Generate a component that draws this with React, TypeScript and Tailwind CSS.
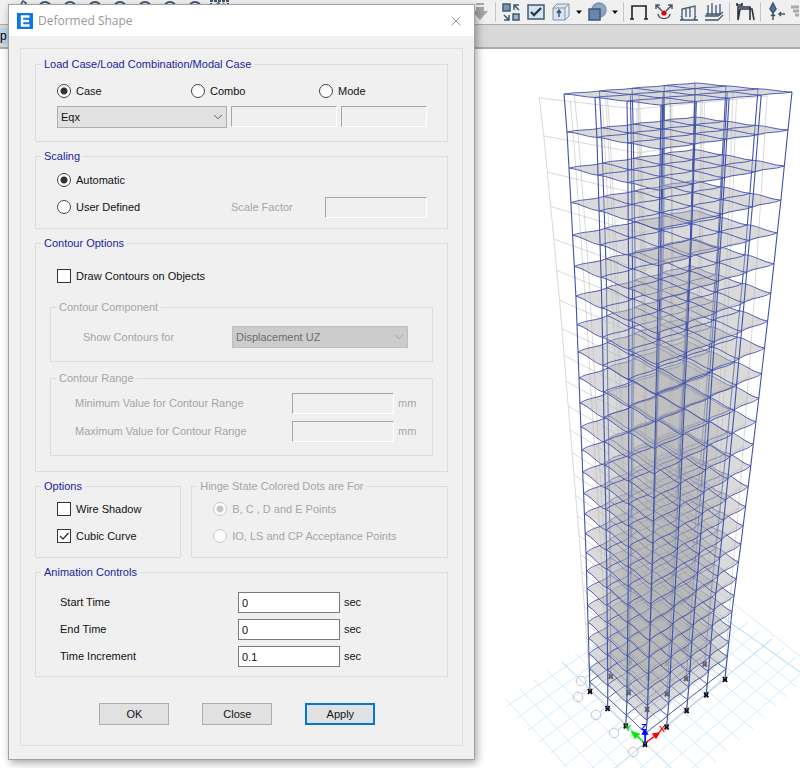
import React from 'react';
import { ChevronDown, X } from 'lucide-react';

type Pt = [number, number];

// x position of a corner column, sampled along its height as [y, x]
const LEFT: Pt[] = [[94, 564], [132, 567], [204, 571], [299, 576], [405, 580], [553, 586], [691, 590]];
const RIGHT: Pt[] = [[92, 792], [130, 788], [199, 781], [291, 771], [396, 759], [464, 751], [543, 741], [611, 732], [679, 725]];
const FRONT: Pt[] = [[105, 661], [300, 658], [540, 653], [722, 647], [744, 645]];
const BACK: Pt[] = [[83, 695], [240, 691], [300, 687], [635, 667]];

const U = [0, 0.27, 0.52, 0.765, 1];
const V = [0, 0.35, 0.68, 1];
const LAST = 26;

const sample = (table: Pt[], y: number) => {
  for (let i = 1; i < table.length; i++) {
    const [y0, x0] = table[i - 1];
    const [y1, x1] = table[i];
    if (y <= y1) return x0 + ((x1 - x0) * (y - y0)) / (y1 - y0);
  }
  return table[table.length - 1][1];
};

const corner = (table: Pt[], k: number, a: number, b: number, c: number, plinth: number, base: number): Pt => {
  const y = k === LAST ? base : k === LAST - 1 ? plinth : (a + b * k) / (1 + c * k);
  return [sample(table, y), y];
};

// levels[k][v][u], k = 0 is the roof and the last one is the ground
const levels: Pt[][][] = Array.from({ length: LAST + 1 }, (_, k) => {
  const f = corner(FRONT, k, 105, 48.79, 0.03218, 733, 744);
  const l = corner(LEFT, k, 94, 41.45, 0.02615, 682, 691);
  const r = corner(RIGHT, k, 92, 41.58, 0.02757, 669, 679);
  const b = corner(BACK, k, 83, 36.8, 0.0239, 626, 635);
  return V.map((v) =>
    U.map((u): Pt => [
      (1 - u) * (1 - v) * f[0] + u * (1 - v) * r[0] + (1 - u) * v * l[0] + u * v * b[0],
      (1 - u) * (1 - v) * f[1] + u * (1 - v) * r[1] + (1 - u) * v * l[1] + u * v * b[1],
    ])
  );
});

const n = (x: number) => x.toFixed(1);

const ghost = ([x, y]: Pt): Pt => {
  const t = Math.max(0, (680 - y) / 590);
  return [x - 25 * t, y + 4 * Math.min(1, t * 1.6)];
};

const beam = (a: Pt, b: Pt, amp: number) =>
  `M${n(a[0])} ${n(a[1])}C${n(a[0] + (b[0] - a[0]) / 3)} ${n(a[1] + (b[1] - a[1]) / 3 - amp)} ${n(a[0] + ((b[0] - a[0]) * 2) / 3)} ${n(a[1] + ((b[1] - a[1]) * 2) / 3 + amp)} ${n(b[0])} ${n(b[1])}`;

const beamsPath = (g: Pt[][], amp: number) => {
  let d = '';
  for (let v = 0; v < 4; v++) {
    for (let u = 0; u < 5; u++) {
      if (u < 4) d += beam(g[v][u], g[v][u + 1], amp);
      if (v < 3) d += beam(g[v][u], g[v + 1][u], -amp);
    }
  }
  return d;
};

const columnsPath = (top: Pt[][], bottom: Pt[][]) => {
  let d = '';
  top.forEach((row, v) => row.forEach((p, u) => {
    const q = bottom[v][u];
    d += `M${n(p[0])} ${n(p[1])}L${n(q[0])} ${n(q[1])}`;
  }));
  return d;
};

const RISING: number[][] = [
  [692, 768, 808, 667], [665, 768, 796, 657], [640, 768, 784, 648], [592, 768, 759, 631], [563, 767, 748, 622],
  [551, 753, 736, 613], [539, 742, 724, 605], [528, 730, 713, 597], [517, 718, 701, 589], [506, 707, 690, 582],
];
const FALLING: number[][] = [
  [506, 699, 567, 767], [520, 689, 594, 768], [534, 680, 619, 768], [548, 671, 645, 768], [575, 653, 698, 768],
  [587, 645, 716, 762], [599, 637, 727, 751], [611, 629, 740, 740], [623, 621, 753, 729], [635, 613, 764, 717],
  [647, 605, 776, 706], [659, 597, 787, 697], [671, 589, 797, 687], [695, 573, 805, 660],
];
const AXES: number[][] = [[615, 768, 772, 639], [562, 662, 671, 768], [683, 589, 800, 672]];
const BUBBLES: Pt[] = [[581, 681], [578, 697], [596, 715], [614, 733], [633, 752]];

const segs = (list: number[][]) => list.map(([a, b, c, d]) => `M${a} ${b}L${c} ${d}`).join('');

function Model() {
  const order = Array.from({ length: LAST }, (_, i) => LAST - 1 - i);
  const ground = levels[LAST];
  return (
    <svg viewBox="475 49 325 719" className="block w-full" fill="none" role="img" aria-label="Deformed model">
      <path d={segs(RISING) + segs(FALLING)} stroke="#d6eafb" />
      <path d={segs(AXES)} stroke="#abd6fa" />
      {BUBBLES.map(([x, y]) => (
        <g key={x} stroke="#c8c8c8">
          <circle cx={x} cy={y} r="4.8" />
          <path d={`M${x + 4} ${y - 3}l8 -6`} />
        </g>
      ))}
      <path d={beamsPath(ground, 0)} stroke="#cdcdcd" />
      {order.map((k) => {
        const g = levels[k].map((row) => row.map(ghost));
        const below = levels[k + 1].map((row) => row.map(ghost));
        const edge = `M${g[3][0].map(n)}L${g[2][0].map(n)}L${g[1][0].map(n)}L${g[0][0].map(n)}L${g[0][4].map(n)}`;
        return <path key={k} d={columnsPath(g, below) + edge} stroke="#b4b4b4" strokeOpacity="0.5" />;
      })}
      {ground.flat().map(([x, y]) => (
        <path key={`${x}-${y}`} d={`M${n(x - 2)} ${n(y - 2)}l4 5m0 -5l-4 5m0 -3h4`} stroke="#111" strokeWidth="2" />
      ))}
      {order.map((k) => {
        const g = levels[k];
        const amp = k === 0 ? 1 : Math.min(3, 1.5 + k * 0.12);
        const slab = [g[0][0], g[0][4], g[3][4], g[3][0]].map((p) => p.map(n).join(',')).join(' ');
        return (
          <g key={k}>
            <path d={columnsPath(g, levels[k + 1])} stroke="#4252aa" strokeWidth="1.1" />
            {k < LAST - 1 && <polygon points={slab} fill="#b6b6b6" fillOpacity="0.5" />}
            <path d={beamsPath(g, k === LAST - 1 ? 1 : amp)} stroke="#4252aa" strokeOpacity="0.9" />
          </g>
        );
      })}
      <g strokeWidth="1.4">
        <path d="M645 743L633 733" stroke="#0e0" />
        <path d="M632 732l7 2l-4 4z" fill="#0e0" stroke="#0e0" />
        <path d="M645 743L658 734" stroke="#f00" />
        <path d="M659 733l-6 1l3 4z" fill="#f00" stroke="#f00" />
        <path d="M645 743V732" stroke="#00f" />
        <path d="M644.500 730l-2 4h5z" fill="#00f" stroke="#00f" />
      </g>
      <g fontFamily="Liberation Sans, sans-serif" fontSize="9" fontWeight="bold">
        <text x="625" y="731" fill="#0d0">Y</text>
        <text x="659" y="732" fill="#f00">X</text>
        <text x="641" y="730" fill="#00f">Z</text>
      </g>
    </svg>
  );
}

function Tool({ label, children, box = '0 0 20 20', className = 'w-5' }: { label: string; children: React.ReactNode; box?: string; className?: string }) {
  return (
    <button aria-label={label} className={`h-5 shrink-0 ${className}`}>
      <svg viewBox={box} className="block h-full w-full" fill="none" stroke="#3f5873" strokeWidth="1.5">{children}</svg>
    </button>
  );
}

function Divider() {
  return <span className="h-5 w-px shrink-0 bg-[#c4c4c4]" />;
}

function Caret({ label }: { label: string }) {
  return (
    <Tool label={label} box="0 0 6 20" className="w-[6px]">
      <path d="M0 8.500h6l-3 3.500z" fill="#111" stroke="none" />
    </Tool>
  );
}

function Toolbar() {
  return (
    <header>
      <div className="flex h-[25px] items-center overflow-hidden border-b border-[#a9a9a9] bg-[#f0f0f0]">
        <div className="flex h-full flex-1 items-start gap-[5px] overflow-hidden pl-[10px]">
          <Tool label="Pen"><path d="M2 18L13 1l3 2L6 17z" /></Tool>
          {['Lock', 'Zoom window', 'Zoom out', 'Zoom in', 'Zoom back', 'Zoom full', 'Pan'].map((name) => (
            <Tool key={name} label={name}><circle cx="10" cy="8" r="6" strokeWidth="2" /></Tool>
          ))}
          <Tool label="Rubber band"><path d="M1 18V1h17v17M5 6l3-3 3 3 3-3" strokeDasharray="3 1" strokeWidth="2" /></Tool>
        </div>
        <div className="flex w-[41.5%] shrink-0 items-center gap-[5px] overflow-hidden pl-1">
          <Tool label="Move down" className="mr-[2px] w-[16px]" box="0 0 16 20">
            <path d="M4 1h8v2H4zM4 5h8v4h4l-8 9-8-9h4z" fill="#a8a8a8" stroke="none" />
          </Tool>
          <Divider />
          <Tool label="Shrink objects">
            <rect x="2" y="2" width="7" height="7" fill="#7b97b8" />
            <rect x="12" y="12" width="6" height="6" fill="#9db3cc" />
            <path d="M18 8l-5-5m0 5V3h5M3 13l5 5m0-5v5H3" />
          </Tool>
          <Tool label="Display options">
            <rect x="2" y="3" width="16" height="14" fill="#d5e3f2" />
            <path d="M5 10l3 3 7-7" stroke="#27394e" strokeWidth="2.300" />
          </Tool>
          <Tool label="Assign">
            <path d="M2 6h12v12H2zM2 6l4-4h12l-4 4M14 18l4-4V2" fill="#dbe4ed" strokeWidth="1" stroke="#7d93aa" />
            <path d="M8 15V9M6 11l2-3 2 3" />
          </Tool>
          <Caret label="Assign menu" />
          <Tool label="Objects">
            <circle cx="12" cy="8" r="7" fill="#8ba6c5" stroke="#7b95b4" />
            <rect x="2" y="7" width="11" height="11" fill="#6886ab" />
          </Tool>
          <Caret label="Objects menu" />
          <Divider />
          <Tool label="Show undeformed"><path d="M3 17V4h14v13M1 17h4M15 17h4" stroke="#222" strokeWidth="1.600" /></Tool>
          <Tool label="Show joints">
            <path d="M3 4l5 5M17 4l-5 5M2 7V3h4M18 7V3h-4M4 12c1 6 11 6 12 0" stroke="#41536a" />
            <circle cx="10" cy="11" r="2.6" fill="#e00000" stroke="none" />
          </Tool>
          <Tool label="Frame loads"><path d="M1 18h18M3 18V7l13-3v14M7 6v9M11 5v10M2 14l2 3M17 14l-2 3" strokeWidth="1.300" /></Tool>
          <Tool label="Shell loads"><path d="M1 14h13l5-4M1 18h13l5-5M4 3v11M8 1v13M12 3v11M16 2v10M2 12h15" strokeWidth="1.300" /></Tool>
          <Divider />
          <Tool label="Deformed shape"><path d="M3 18L5 7h12l2 11M3 18V5h12v13M2 1v3M7 1v3M2 3h5" stroke="#28323e" strokeWidth="1.600" /></Tool>
          <Divider />
          <Tool label="Forces">
            <path d="M7 1l3 6-3 4-3-4z" fill="#557395" />
            <path d="M7 18v-6M5 14l2-2 2 2M19 12h-6M15 10l-2 2 2 2" />
          </Tool>
          <Tool label="Tables" className="w-2" box="0 0 8 20"><path d="M0 5h8M2 9h6M4 13h4" stroke="#aaa" strokeWidth="3" /></Tool>
        </div>
      </div>
      <div className="flex h-6 items-center border-b-2 border-[#aaa] bg-[#d8d8d8]">
        <span className="bg-[#bcd3ea] pr-2 text-xs leading-4">p</span>
      </div>
    </header>
  );
}

function Group({ title, off, className = '', body, children }: { title: string; off?: boolean; className?: string; body: string; children: React.ReactNode }) {
  return (
    <fieldset className={`min-w-0 border border-[#dcdcdc] ${className}`}>
      <legend className={`ml-[5px] px-[3px] leading-4 ${off ? 'text-[#a5a5a5]' : 'text-[#1c1c9c]'}`}>{title}</legend>
      <div className={body}>{children}</div>
    </fieldset>
  );
}

function Radio({ label, name, checked, disabled, className = '' }: { label: string; name: string; checked?: boolean; disabled?: boolean; className?: string }) {
  return (
    <label className={`flex items-center gap-[5px] leading-4 ${disabled ? 'text-[#a5a5a5]' : ''} ${className}`}>
      <input
        type="radio"
        name={name}
        defaultChecked={checked}
        disabled={disabled}
        className="size-[14px] shrink-0 appearance-none rounded-full border border-[#444] bg-white checked:bg-[radial-gradient(circle,#333_0_3px,#fff_4px)] disabled:border-[#c6c6c6] disabled:checked:bg-[radial-gradient(circle,#c4c4c4_0_3px,#fff_4px)]"
      />
      {label}
    </label>
  );
}

function Check({ label, checked }: { label: string; checked?: boolean }) {
  return (
    <label className="flex items-center gap-[5px] leading-4">
      <span className="relative size-[14px] shrink-0">
        <input type="checkbox" defaultChecked={checked} className="peer block size-[14px] appearance-none border border-[#333] bg-white" />
        <svg viewBox="0 0 14 14" className="pointer-events-none absolute inset-0 hidden peer-checked:block" fill="none" stroke="#333" strokeWidth="1.300">
          <path d="M3 7l3 3 5.500-6" />
        </svg>
      </span>
      {label}
    </label>
  );
}

function Select({ label, value, disabled, className = '' }: { label: string; value: string; disabled?: boolean; className?: string }) {
  return (
    <div className={`relative ${className}`}>
      <select
        aria-label={label}
        disabled={disabled}
        className="block h-[22px] w-full appearance-none border border-[#adadad] bg-[#e1e1e1] px-[3px] disabled:border-[#bfbfbf] disabled:bg-[#cccccc] disabled:text-[#6d6d6d] disabled:opacity-100"
      >
        <option>{value}</option>
      </select>
      <ChevronDown size={14} strokeWidth={1.5} className={`pointer-events-none absolute right-[2px] top-1 ${disabled ? 'text-[#a0a0a0]' : 'text-[#444]'}`} />
    </div>
  );
}

const SUNKEN = 'h-[21px] min-w-0 border border-b-white border-r-white border-l-[#a5a5a5] border-t-[#a5a5a5] bg-[#f0f0f0] px-1';

function RangeRow({ label }: { label: string }) {
  return (
    <label className="flex h-[21px] items-center text-[#a5a5a5]">
      <span className="w-[217px] shrink-0">{label}</span>
      <input disabled className={`w-[102px] ${SUNKEN}`} />
      <span className="ml-1">mm</span>
    </label>
  );
}

function TimeRow({ label, value }: { label: string; value: string }) {
  return (
    <label className="flex h-[21px] items-center">
      <span className="w-[178px] shrink-0">{label}</span>
      <input defaultValue={value} className="h-[21px] w-[102px] min-w-0 border border-[#7a7a7a] bg-white px-[3px]" />
      <span className="ml-1">sec</span>
    </label>
  );
}

function DeformedShapeDialog() {
  return (
    <section
      role="dialog"
      aria-label="Deformed Shape"
      className="absolute left-2 top-1 w-7/12 min-w-[460px] border border-[#a2a2a2] bg-[#f0f0f0] font-['Liberation_Sans',Arial,sans-serif] text-[11px] text-[#111] shadow-[2px_3px_8px_rgba(0,0,0,0.35)]"
    >
      <div className="flex h-[31px] items-center bg-white pl-2 pr-[10px]">
        <svg viewBox="0 0 16 16" className="size-4">
          <rect width="16" height="16" fill="#0a78e6" />
          <path d="M12.500 3.500H5v9h7.500M5 8h7" fill="none" stroke="#fff" strokeWidth="2.400" />
        </svg>
        <h1 className="ml-[5px] flex-1 font-['Open_Sans','Noto_Sans',sans-serif] text-xs text-[#999]">Deformed Shape</h1>
        <button aria-label="Close window"><X size={16} strokeWidth={1.2} className="text-[#777]" /></button>
      </div>

      <div className="px-[11px] pb-[13px] pt-3">
        <div className="border border-[#dfdfdf] px-[14px] pb-5 pt-[7px]">
          <Group title="Load Case/Load Combination/Modal Case" body="pb-[13px] pl-[21px] pr-5 pt-[11px]">
            <div className="flex">
              <Radio label="Case" name="load" checked className="w-[134px]" />
              <Radio label="Combo" name="load" className="w-[128px]" />
              <Radio label="Mode" name="load" />
            </div>
            <div className="mt-[7px] grid grid-cols-[171fr_106fr_86fr] gap-1">
              <Select label="Load case" value="Eqx" />
              <input aria-label="Combination" disabled className={SUNKEN} />
              <input aria-label="Mode number" disabled className={SUNKEN} />
            </div>
          </Group>

          <Group title="Scaling" className="mt-[6px]" body="flex flex-col gap-[7px] pb-[11px] pl-[21px] pr-5 pt-[6px]">
            <Radio label="Automatic" name="scaling" checked className="h-5" />
            <div className="flex h-5 items-center">
              <Radio label="User Defined" name="scaling" className="w-[174px]" />
              <label className="flex flex-1 items-center text-[#a5a5a5]">
                <span className="flex-1">Scale Factor</span>
                <input disabled className={`w-[102px] ${SUNKEN}`} />
              </label>
            </div>
          </Group>

          <Group title="Contour Options" className="mt-[6px]" body="px-[14px] pb-[15px] pt-[17px]">
            <div className="pl-[7px]">
              <Check label="Draw Contours on Objects" />
            </div>
            <Group off title="Contour Component" className="mt-[15px]" body="flex items-center pb-[13px] pl-8 pr-6 pt-[11px] text-[#a5a5a5]">
              <span className="w-[149px] shrink-0">Show Contours for</span>
              <Select label="Show Contours for" value="Displacement UZ" disabled className="flex-1" />
            </Group>
            <Group off title="Contour Range" className="mt-2" body="flex flex-col gap-[7px] pb-[13px] pl-6 pr-2 pt-[7px]">
              <RangeRow label="Minimum Value for Contour Range" />
              <RangeRow label="Maximum Value for Contour Range" />
            </Group>
          </Group>

          <div className="mt-[6px] grid grid-cols-[146fr_256fr] gap-[10px]">
            <Group title="Options" body="flex flex-col gap-[11px] pb-[13px] pl-[21px] pt-[7px]">
              <Check label="Wire Shadow" />
              <Check label="Cubic Curve" checked />
            </Group>
            <Group off title="Hinge State Colored Dots are For" body="flex flex-col gap-[11px] pb-[13px] pl-[21px] pt-[7px]">
              <Radio label="B, C , D and E Points" name="hinge" checked disabled />
              <Radio label="IO, LS and CP Acceptance Points" name="hinge" disabled />
            </Group>
          </div>

          <Group title="Animation Controls" className="mt-[6px]" body="flex flex-col gap-[6px] pb-[9px] pl-6 pt-3">
            <TimeRow label="Start Time" value="0" />
            <TimeRow label="End Time" value="0" />
            <TimeRow label="Time Increment" value="0.1" />
          </Group>

          <div className="mt-[26px] flex justify-center gap-[33px] pr-2">
            <button className="h-[22px] w-[70px] border border-[#adadad] bg-[#e1e1e1]">OK</button>
            <button className="h-[22px] w-[70px] border border-[#adadad] bg-[#e1e1e1]">Close</button>
            <button className="h-[22px] w-[70px] border-2 border-[#0078d7] bg-[#e1e1e1]">Apply</button>
          </div>
        </div>
      </div>
    </section>
  );
}

export default function App() {
  return (
    <main className="relative min-h-screen overflow-hidden bg-white font-['Liberation_Sans',Arial,sans-serif]">
      <Toolbar />
      <div className="ml-auto w-[40.625%]">
        <Model />
      </div>
      <DeformedShapeDialog />
    </main>
  );
}
